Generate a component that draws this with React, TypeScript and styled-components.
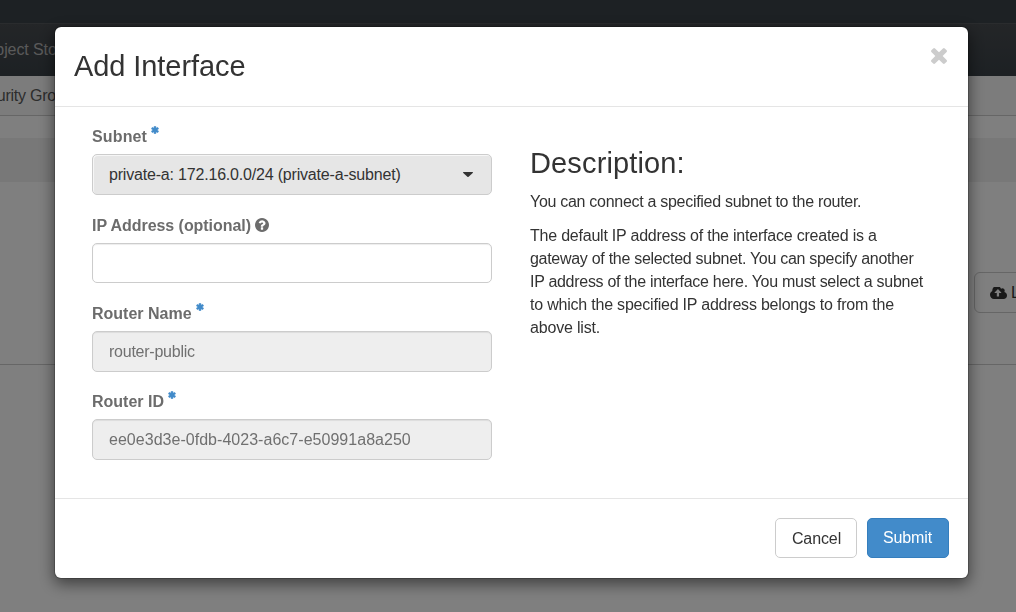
import React from "react";
import styled, { createGlobalStyle } from "styled-components";

const GlobalStyle = createGlobalStyle`
  * { box-sizing: border-box; }
  body {
    margin: 0;
    background: #ffffff;
    color: #333333;
    font-family: "Liberation Sans", Arial, sans-serif;
    font-size: 16px;
    line-height: 23px;
    overflow: hidden;
  }
`;

const Page = styled.div`
  height: 612px;
  display: flex;
  flex-direction: column;
  overflow: hidden;
`;
const TopBar = styled.div`
  height: 23px;
  flex: none;
  background: #3a4248;
`;
const NavBar = styled.div`
  height: 53px;
  flex: none;
  display: flex;
  align-items: center;
  padding-bottom: 2px;
  border-top: 1px solid #54585c;
  background: linear-gradient(#484c50, #3a4248);
  color: #b4b4b4;
`;
const SubNav = styled.div`
  height: 40px;
  flex: none;
  display: flex;
  align-items: center;
  background: #f8f8f8;
  border-bottom: 1px solid #cccccc;
  color: #5a5a5a;
`;
const Clipped = styled.span<{ $shift: number; $spacing?: number }>`
  margin-left: ${(p) => -p.$shift}px;
  letter-spacing: ${(p) => p.$spacing ?? 0}px;
  white-space: nowrap;
`;
const Strip = styled.div`
  height: 44px;
  flex: none;
  margin-top: 22px;
  background: #f0f0f0;
`;
const Toolbar = styled.div`
  height: 183px;
  flex: none;
  display: flex;
  justify-content: flex-end;
  padding-top: 90px;
  border-bottom: 1px solid #cccccc;
`;
const LaunchButton = styled.div`
  width: 180px;
  height: 41px;
  flex: none;
  margin-right: -138px;
  padding-left: 15px;
  display: flex;
  align-items: center;
  gap: 4px;
  border: 1px solid #cccccc;
  border-radius: 6px;
  white-space: nowrap;
`;

const Backdrop = styled.div`
  position: fixed;
  inset: 0;
  background: rgba(0, 0, 0, 0.5);
  padding: 26px 0 0 54px;
`;
const Dialog = styled.div`
  width: 915px;
  height: 553px;
  display: flex;
  flex-direction: column;
  background: #ffffff;
  background-clip: padding-box;
  border: 1px solid rgba(0, 0, 0, 0.2);
  border-radius: 7px;
  box-shadow: 0 5px 15px rgba(0, 0, 0, 0.5);
`;
const DialogHeader = styled.div`
  height: 80px;
  flex: none;
  display: flex;
  justify-content: space-between;
  padding: 19px 21px 0 19px;
  border-bottom: 1px solid #e5e5e5;
`;
const Heading = styled.h3<{ $spacing: number }>`
  margin: 0;
  font-size: 29px;
  font-weight: 400;
  line-height: 40px;
  letter-spacing: ${(p) => p.$spacing}px;
  white-space: nowrap;
`;
const DialogBody = styled.div`
  height: 391px;
  flex: none;
  display: grid;
  grid-template-columns: 400px 400px;
  column-gap: 38px;
  padding: 18px 37px 0;
`;
const Form = styled.div`
  display: flex;
  flex-direction: column;
`;
const Field = styled.div<{ $height?: number }>`
  height: ${(p) => p.$height ?? 88}px;
  display: flex;
  flex-direction: column;
`;
const Label = styled.div<{ $spacing?: number }>`
  height: 29px;
  flex: none;
  display: flex;
  color: #6c6c6c;
  font-weight: 700;
  letter-spacing: ${(p) => p.$spacing ?? 0}px;
`;
const Star = styled.span`
  display: flex;
  margin: 1px 0 0 4px;
  color: #428bca;
`;
const Help = styled.span`
  display: flex;
  margin: 4px 0 0 4px;
`;
const Control = styled.div<{ $disabled?: boolean; $height?: number; $spacing?: number }>`
  height: ${(p) => p.$height ?? 41}px;
  padding: 0 16px;
  display: flex;
  align-items: center;
  border: 1px solid #cccccc;
  border-radius: 5px;
  background: ${(p) => (p.$disabled ? "#eeeeee" : "#ffffff")};
  color: #707070;
  box-shadow: inset 0 1px 1px rgba(0, 0, 0, 0.075);
  letter-spacing: ${(p) => p.$spacing ?? 0}px;
  white-space: nowrap;
`;
const Select = styled(Control)`
  justify-content: space-between;
  padding-right: 18px;
  background: #e6e6e6;
  color: #333333;
  box-shadow: inset 1px 1px 0 #f6f6f6;
`;
const Description = styled.div`
  padding-top: 18px;
`;
const Paragraph = styled.p`
  margin: 0 0 11px;
  white-space: nowrap;
  &:first-of-type {
    margin-top: 7px;
  }
`;
const Line = styled.span<{ $spacing: number }>`
  display: block;
  letter-spacing: ${(p) => p.$spacing}px;
`;
const DialogFooter = styled.div`
  flex: 1;
  display: flex;
  justify-content: flex-end;
  gap: 10px;
  padding: 19px 19px 0;
  border-top: 1px solid #e5e5e5;
`;
const Button = styled.button<{ $primary?: boolean }>`
  width: 82px;
  height: 40px;
  padding: ${(p) => (p.$primary ? "0 1px 1px 0" : "1px 0 0 1px")};
  border: 1px solid ${(p) => (p.$primary ? "#357ebd" : "#cccccc")};
  border-radius: 5px;
  background: ${(p) => (p.$primary ? "#428bca" : "#ffffff")};
  color: ${(p) => (p.$primary ? "#ffffff" : "#333333")};
  font: inherit;
  letter-spacing: -0.1px;
`;

const Asterisk = () => (
  <Star>
    <svg
      width="8"
      height="8"
      viewBox="80 80 1632 1632"
      fill="currentColor"
      stroke="currentColor"
      strokeWidth="110"
    >
      <path d="M1546 1050q46 26 59.500 77.500t-12.500 97.500l-64 110q-26 46-77.500 59.500t-97.500-12.500l-266-153v307q0 52-38 90t-90 38h-128q-52 0-90-38t-38-90v-307l-266 153q-46 26-97.500 12.500t-77.500-59.500l-64-110q-26-46-12.500-97.500t59.500-77.500l266-154-266-154q-46-26-59.500-77.500t12.500-97.500l64-110q26-46 77.500-59.500t97.500 12.500l266 153v-307q0-52 38-90t90-38h128q52 0 90 38t38 90v307l266-153q46-26 97.500-12.500t77.500 59.500l64 110q26 46 12.500 97.500t-59.500 77.500l-266 154z" />
    </svg>
  </Star>
);
const QuestionCircle = () => (
  <Help>
    <svg width="14" height="14" viewBox="128 128 1536 1536" fill="currentColor">
      <path d="M1024 1376v-192q0-14-9-23t-23-9h-192q-14 0-23 9t-9 23v192q0 14 9 23t23 9h192q14 0 23-9t9-23zm256-672q0-88-55.500-163t-138.500-116-170-41q-243 0-371 213-15 24 8 42l132 100q7 6 19 6 16 0 25-12 53-68 86-92 34-24 86-24 48 0 85.500 26t37.500 59q0 38-20 61t-68 45q-63 28-115.500 86.500t-52.500 125.500v36q0 14 9 23t23 9h192q14 0 23-9t9-23q0-19 21.500-49.500t54.500-49.500q32-18 49-28.500t46-35 44.500-48 28-60.500 12.500-81zm384 192q0 209-103 385.500t-279.500 279.500-385.500 103-385.500-103-279.500-279.500-103-385.500 103-385.500 279.500-279.500 385.500-103 385.500 103 279.500 279.500 103 385.500z" />
    </svg>
  </Help>
);
const CloseSlot = styled.span`
  display: flex;
  padding-top: 2px;
  color: #cccccc;
`;
const CloseIcon = () => (
  <CloseSlot>
    <svg width="16" height="16" viewBox="302 366 1188 1188" fill="currentColor">
      <path d="M1490 1322q0 40-28 68l-136 136q-28 28-68 28t-68-28l-294-294-294 294q-28 28-68 28t-68-28l-136-136q-28-28-28-68t28-68l294-294-294-294q-28-28-28-68t28-68l136-136q28-28 68-28t68 28l294 294 294-294q28-28 68-28t68 28l136 136q28 28 28 68t-28 68l-294 294 294 294q28 28 28 68z" />
    </svg>
  </CloseSlot>
);
const CloudUpload = () => (
  <svg width="17" height="12" viewBox="-64 256 1920 1280" preserveAspectRatio="none" fill="currentColor">
    <path d="M1216 864q0-14-9-23l-352-352q-9-9-23-9t-23 9l-351 351q-10 12-10 24 0 14 9 23t23 9h224v352q0 13 9.500 22.500t22.500 9.500h192q13 0 22.500-9.500t9.500-22.500v-352h224q13 0 22.500-9.500t9.500-22.500zm640 288q0 159-112.500 271.500t-271.500 112.500h-1088q-185 0-316.500-131.500t-131.500-316.500q0-130 70-240t188-165q-2-30-2-43 0-212 150-362t362-150q156 0 285.500 87t188.500 231q71-62 166-62 106 0 181 75t75 181q0 76-41 138 130 31 213.500 135.500t83.500 238.500z" />
  </svg>
);
const Caret = () => (
  <svg width="10" height="5" viewBox="0 0 10 5" fill="currentColor">
    <path d="M0.300 0h9.400q0.500 0.300 0 0.900L5.600 4.700q-0.600 0.500-1.200 0L0.300 0.900q-0.500-0.600 0-0.900z" />
  </svg>
);

export default function App() {
  return (
    <>
      <GlobalStyle />
      <Page>
        <TopBar />
        <NavBar>
          <Clipped $shift={17} $spacing={-0.1}>Object Store</Clipped>
        </NavBar>
        <SubNav>
          <Clipped $shift={30} $spacing={-0.25}>Security Groups</Clipped>
        </SubNav>
        <Strip />
        <Toolbar>
          <LaunchButton>
            <CloudUpload />
            Launch Instance
          </LaunchButton>
        </Toolbar>
      </Page>
      <Backdrop>
        <Dialog role="dialog">
          <DialogHeader>
            <Heading $spacing={-0.08}>Add Interface</Heading>
            <CloseIcon />
          </DialogHeader>
          <DialogBody>
            <Form>
              <Field $height={89}>
                <Label $spacing={0.14}>Subnet<Asterisk /></Label>
                <Select $spacing={-0.19}>
                  private-a: 172.16.0.0/24 (private-a-subnet)
                  <Caret />
                </Select>
              </Field>
              <Field>
                <Label $spacing={-0.05}>IP Address (optional)<QuestionCircle /></Label>
                <Control $height={40} />
              </Field>
              <Field>
                <Label>Router Name<Asterisk /></Label>
                <Control $disabled $spacing={-0.24}>router-public</Control>
              </Field>
              <Field>
                <Label>Router ID<Asterisk /></Label>
                <Control $disabled $spacing={0.03}>ee0e3d3e-0fdb-4023-a6c7-e50991a8a250</Control>
              </Field>
            </Form>
            <Description>
              <Heading $spacing={0.14}>Description:</Heading>
              <Paragraph>
                <Line $spacing={-0.29}>You can connect a specified subnet to the router.</Line>
              </Paragraph>
              <Paragraph>
                <Line $spacing={-0.22}>The default IP address of the interface created is a</Line>
                <Line $spacing={-0.29}>gateway of the selected subnet. You can specify another</Line>
                <Line $spacing={-0.29}>IP address of the interface here. You must select a subnet</Line>
                <Line $spacing={-0.21}>to which the specified IP address belongs to from the</Line>
                <Line $spacing={-0.18}>above list.</Line>
              </Paragraph>
            </Description>
          </DialogBody>
          <DialogFooter>
            <Button>Cancel</Button>
            <Button $primary>Submit</Button>
          </DialogFooter>
        </Dialog>
      </Backdrop>
    </>
  );
}
